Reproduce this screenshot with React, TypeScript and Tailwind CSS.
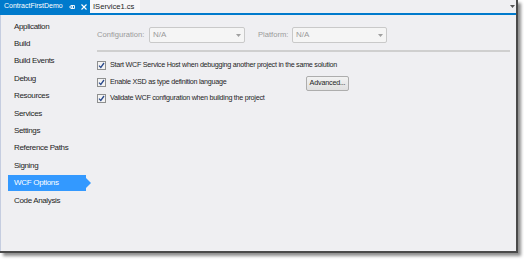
import React from "react";

const items = [
  "Application",
  "Build",
  "Build Events",
  "Debug",
  "Resources",
  "Services",
  "Settings",
  "Reference Paths",
  "Signing",
  "WCF Options",
  "Code Analysis",
];

function Check({ label }: { label: string }) {
  return (
    <div className="flex items-center h-[16.7px]">
      <div className="w-[9px] h-[9px] border border-[#8e8f8f] bg-[#f4f4f4] flex items-center justify-center">
        <svg width="7" height="7" viewBox="0 0 7 7">
          <path d="M1 3.6 L2.8 5.5 L6 1" stroke="#2b4a8c" strokeWidth="1.3" fill="none" />
        </svg>
      </div>
      <span className="ml-[4px] text-[7.2px] tracking-[-0.27px] text-[#1e1e1e] whitespace-nowrap">{label}</span>
    </div>
  );
}

function Select({ w }: { w: string }) {
  return (
    <div className={`${w} h-[16px] border border-[#c9c9c9] rounded-[2px] bg-[#f5f5f5] flex items-center justify-between px-[3px]`}>
      <span className="text-[8px] text-[#9a9a9a]">N/A</span>
      <svg width="5" height="3" viewBox="0 0 5 3"><path d="M0 0 H5 L2.5 3 Z" fill="#a0a0a0" /></svg>
    </div>
  );
}

export default function App() {
  return (
    <div className="w-[524px] h-[260px] bg-white" style={{ fontFamily: '"Liberation Sans", Arial, sans-serif' }}>
      <div className="w-[518px] h-[253px] bg-[#efeff2] border-r-2 border-b-2 border-[#4a4a4a] shadow-[3px_3px_3px_rgba(0,0,0,0.45)] flex flex-col">
        <div className="h-[13px] flex items-stretch bg-[#efeff2] relative">
          <div className="w-[90px] bg-[#007acc] flex items-center pl-[4px] text-white text-[7px] whitespace-nowrap">
            <span>ContractFirstDemo</span>
            <svg className="ml-[6px]" width="7" height="6" viewBox="0 0 7 6">
              <path d="M0 3 H2 M2 1 V5 M2 1.5 H5.5 V4.5 H2 M3.5 1.5 V4.5" stroke="#ffffff" strokeWidth="0.9" fill="none" />
            </svg>
            <svg className="ml-[5px]" width="6" height="6" viewBox="0 0 6 6">
              <path d="M0.5 0.5 L5.5 5.5 M5.5 0.5 L0.5 5.5" stroke="#ffffff" strokeWidth="1.1" />
            </svg>
          </div>
          <div className="flex items-center pl-[3px] text-[7.6px] text-[#1e1e1e] bg-[#f7f7f9] pr-[6px] whitespace-nowrap">IService1.cs</div>
          <div className="flex-1" />
          <svg className="absolute right-[1px] top-[5px]" width="5" height="3" viewBox="0 0 5 3"><path d="M0 0 H5 L2.5 3 Z" fill="#555" /></svg>
        </div>
        <div className="h-[2px] bg-[#007acc]" />
        <div className="flex flex-1">
          <div className="w-[92px] border-l border-[#c5cde0] pt-[3px]">
            {items.map((it) => (
              <div key={it} className="relative h-[17.4px] flex items-center">
                {it === "WCF Options" ? (
                  <div className="ml-[7px] w-[78px] h-[16px] bg-[#3399ff] text-white flex items-center pl-[6px] text-[8px] tracking-[-0.3px] relative whitespace-nowrap">
                    WCF Options
                    <div className="absolute right-[-5px] top-[3px] w-0 h-0 border-y-[5px] border-y-transparent border-l-[5px] border-l-[#3399ff]" />
                  </div>
                ) : (
                  <span className="pl-[13px] text-[8px] tracking-[-0.35px] text-[#1e1e1e] whitespace-nowrap">{it}</span>
                )}
              </div>
            ))}
          </div>
          <div className="flex-1 pl-[5px] pr-[6px] pt-[12px]">
            <div className="flex items-center">
              <span className="text-[7.6px] text-[#9a9a9a] w-[52px] whitespace-nowrap">Configuration:</span>
              <Select w="w-[96px]" />
              <span className="ml-[13px] text-[7.6px] text-[#9a9a9a] w-[34px] whitespace-nowrap">Platform:</span>
              <Select w="w-[95px]" />
            </div>
            <div className="mt-[7px] h-[2px] bg-[#cfcfcf]" />
            <div className="mt-[5px] flex">
              <div className="flex flex-col">
                <Check label="Start WCF Service Host when debugging another project in the same solution" />
                <Check label="Enable XSD as type definition language" />
                <Check label="Validate WCF configuration when building the project" />
              </div>
            </div>
            <div className="relative">
              <div className="absolute left-[209px] top-[-31px] w-[43px] h-[15px] border border-[#adadad] rounded-[2px] bg-gradient-to-b from-[#f2f2f2] to-[#e0e0e0] text-[7.2px] tracking-[-0.2px] text-[#1e1e1e] flex items-center justify-center whitespace-nowrap">Advanced...</div>
            </div>
          </div>
        </div>
      </div>
    </div>
  );
}
